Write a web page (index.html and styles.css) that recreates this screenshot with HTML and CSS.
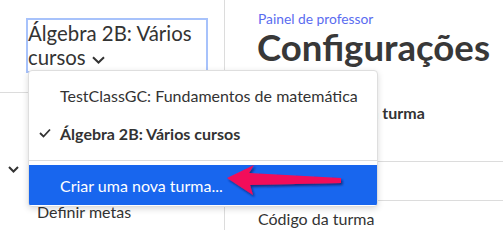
FILE: index.html
```html
<!DOCTYPE html>
<html lang="pt">
<head>
<meta charset="utf-8">
<link rel="stylesheet" href="styles.css">
</head>
<body>
<div class="page">
  <aside class="sidebar">
    <div class="class-picker">
      <button class="picker-btn">Álgebra 2B: Vários cursos <svg class="caret" width="13" height="8" viewBox="0 0 13 8"><path d="M1 1.2 L6.5 6.5 L12 1.2" fill="none" stroke="#333" stroke-width="2"/></svg></button>
    </div>
    <div class="side-section">
      <div class="side-head">
        <svg class="side-chev" width="11" height="7" viewBox="0 0 11 7"><path d="M1 1 L5.5 5.5 L10 1" fill="none" stroke="#333" stroke-width="2"/></svg>
        <span>Turma</span>
      </div>
      <div class="side-link">Definir metas</div>
    </div>
  </aside>
  <main class="main">
    <div class="crumb">Painel de professor</div>
    <h1 class="title">Configurações</h1>
    <div class="field-label">Nome exibido da turma</div>
    <div class="rows">
      <div class="row"></div>
      <div class="row row-label">Código da turma</div>
    </div>
  </main>
</div>

<div class="menu">
  <div class="menu-item">TestClassGC: Fundamentos de matemática</div>
  <div class="menu-item checked"><svg class="check" width="12" height="10" viewBox="0 0 12 10"><path d="M1 5 L4.5 8.5 L11 1.5" fill="none" stroke="#333" stroke-width="1.8"/></svg>Álgebra 2B: Vários cursos</div>
  <div class="menu-divider"></div>
  <div class="menu-item active">Criar uma nova turma...</div>
</div>

<svg class="arrow" width="130" height="40" viewBox="0 0 130 40">
  <defs>
    <filter id="sh" x="-10%" y="-30%" width="130%" height="170%">
      <feDropShadow dx="1.5" dy="2" stdDeviation="1.2" flood-color="#0a1a5a" flood-opacity="0.75"/>
    </filter>
  </defs>
  <polygon filter="url(#sh)" fill="#f20f5a" points="5,18 32,5 27,13 119,18 119,23 28,25 31,35"/>
</svg>
</body>
</html>
```

FILE: styles.css
```css
* { box-sizing: border-box; }
html, body {
  margin: 0;
  padding: 0;
  background: #fff;
  font-family: Lato, "Liberation Sans", sans-serif;
  color: #333;
  overflow: hidden;
}
.page {
  display: flex;
  width: 503px;
  height: 230px;
}
.sidebar {
  width: 225px;
  flex: none;
  border-right: 1px solid #dcdcdc;
  display: flex;
  flex-direction: column;
}
.class-picker {
  height: 93px;
  border-bottom: 1px solid #dcdcdc;
  padding: 18px 0 0 26px;
}
.picker-btn {
  display: block;
  width: 182px;
  margin: 0;
  padding: 1px 0 2px 0;
  border: 2px solid #a7c2fb;
  background: #fff;
  text-align: left;
  font-family: Lato, "Liberation Sans", sans-serif;
  font-size: 20.4px;
  line-height: 24px;
  color: #333;
}
.caret { vertical-align: middle; margin-left: 1px; }
.side-head {
  display: flex;
  align-items: center;
  gap: 12px;
  padding: 66px 0 0 8px;
  height: 86px;
  font-size: 16px;
}
.side-link {
  padding: 23px 0 0 37px;
  font-size: 16px;
  line-height: 20px;
}
.main {
  flex: 1;
  padding-top: 12px;
}
.crumb {
  padding-left: 33px;
  font-size: 13.8px;
  line-height: 14px;
  color: #5a6cf0;
}
.title {
  margin: 4px 0 0;
  padding-left: 32px;
  font-size: 36.6px;
  line-height: 34px;
  font-weight: 700;
  color: #383838;
}
.field-label {
  padding: 39px 0 0 33px;
  font-size: 16px;
  line-height: 20px;
  font-weight: 700;
}
.rows {
  margin-top: 38px;
}
.row {
  height: 39px;
  border-top: 1px solid #dcdcdc;
}
.row-label {
  height: 40px;
  border-top: 1px solid #dcdcdc;
  padding: 8px 0 0 33px;
  font-size: 16px;
  line-height: 20px;
}
.menu {
  position: absolute;
  left: 28px;
  top: 70px;
  width: 350px;
  background: #fff;
  border: 1px solid #dedede;
  border-radius: 4px;
  box-shadow: 0 2px 6px rgba(0,0,0,0.15);
  padding: 5px 0 1px;
  overflow: hidden;
}
.menu-item {
  position: relative;
  height: 38px;
  display: flex;
  align-items: center;
  padding-left: 31px;
  font-size: 16px;
  color: #333;
  white-space: nowrap;
}
.menu-item.checked { font-weight: 700; }
.check {
  position: absolute;
  left: 10px;
  top: 14px;
}
.menu-divider {
  height: 1px;
  background: #dcdcdc;
  margin: 8px 0 4px;
}
.menu-item.active {
  height: 40px;
  background: #1866ee;
  color: #fff;
}
.arrow {
  position: absolute;
  left: 222px;
  top: 160px;
}
```
